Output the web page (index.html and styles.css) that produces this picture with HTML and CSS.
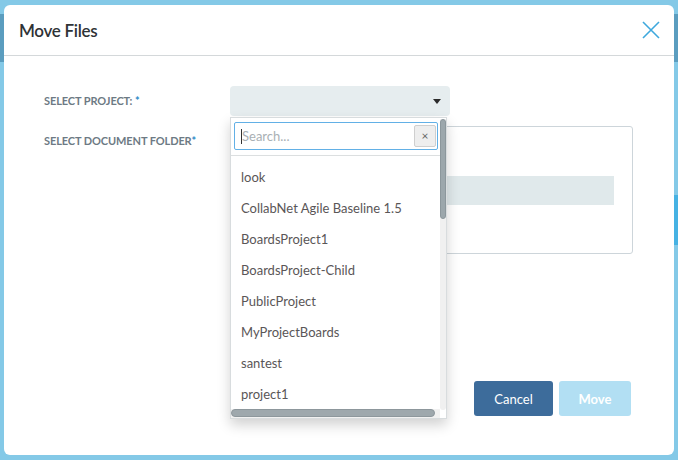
FILE: index.html
```html
<!DOCTYPE html>
<html>
<head>
<meta charset="utf-8">
<link rel="stylesheet" href="styles.css">
</head>
<body>
<div class="modal">
  <div class="modal-header">
    <h1 class="title">Move Files</h1>
    <svg class="close" width="18" height="18" viewBox="0 0 18 18"><path d="M1 1 L17 17 M17 1 L1 17" stroke="#3ea8dd" stroke-width="1.6" fill="none"/></svg>
  </div>
  <div class="modal-body">
    <div class="form-row row-project">
      <div class="label">SELECT PROJECT: <span class="req">*</span></div>
      <div class="field">
        <div class="select">
          <span class="caret"></span>
        </div>
        <div class="dropdown">
          <div class="dd-main">
            <div class="search">
              <span class="search-input"><span class="cursor"></span>Search...</span>
              <span class="clear">×</span>
            </div>
            <ul class="list">
              <li>look</li>
              <li>CollabNet Agile Baseline 1.5</li>
              <li>BoardsProject1</li>
              <li>BoardsProject-Child</li>
              <li>PublicProject</li>
              <li>MyProjectBoards</li>
              <li>santest</li>
              <li>project1</li>
            </ul>
            <div class="hscroll"><div class="hthumb"></div></div>
          </div>
          <div class="vscroll"><div class="vthumb"></div></div>
        </div>
      </div>
    </div>
    <div class="form-row row-folder">
      <div class="label label-folder">SELECT DOCUMENT FOLDER<span class="req">*</span></div>
      <div class="field">
        <div class="tree">
          <div class="tree-row"></div>
        </div>
      </div>
    </div>
  </div>
  <div class="modal-footer">
    <button class="btn btn-cancel">Cancel</button>
    <button class="btn btn-move">Move</button>
  </div>
</div>
</body>
</html>
```
FILE: styles.css
```css
* { box-sizing: border-box; }
html, body { margin: 0; padding: 0; }
body {
  width: 678px;
  height: 460px;
  overflow: hidden;
  padding: 5px 4px;
  font-family: Lato, "Open Sans", sans-serif;
  background:
    linear-gradient(to bottom, transparent 195px, #46b2e3 195px, #46b2e3 245px, transparent 245px) right top / 6px 100% no-repeat,
    linear-gradient(to bottom, transparent 14px, #5b9dbf 14px, #5b9dbf 62px, transparent 62px) 0 0 / 100% 100% no-repeat,
    #84c9e7;
}
.modal {
  width: 670px;
  height: 450px;
  background: #fff;
  border-radius: 6px;
  display: flex;
  flex-direction: column;
}
.modal-header {
  height: 51px;
  border-bottom: 1px solid #d4d8da;
  display: flex;
  align-items: center;
  justify-content: space-between;
  padding: 0 14px 0 15px;
}
.title {
  margin: 0;
  font-size: 17px;
  font-weight: 600;
  color: #2f3336;
  letter-spacing: -0.3px;
}
.close { display: block; margin-top: 0; }
.modal-body {
  flex: 1;
  padding: 30px 0 0 40px;
  display: flex;
  flex-direction: column;
  gap: 10px;
}
.form-row { display: flex; }
.label {
  width: 186px;
  font-size: 11px;
  font-weight: 700;
  color: #6d7a84;
  letter-spacing: -0.1px;
}
.row-project .label { line-height: 30px; }
.label-folder { padding-top: 8px; line-height: 14px; }
.req { color: #2d8bc6; }
.field { position: relative; }
.select {
  width: 220px;
  height: 30px;
  background: #e6edef;
  border-radius: 4px;
  position: relative;
}
.caret {
  position: absolute;
  right: 9px;
  top: 13px;
  width: 0;
  height: 0;
  border-left: 4px solid transparent;
  border-right: 4px solid transparent;
  border-top: 5px solid #2b2b2b;
}
.dropdown {
  position: absolute;
  left: 0;
  top: 31px;
  width: 217px;
  height: 302px;
  background: #fff;
  border: 1px solid #d8dcde;
  box-shadow: 0 6px 12px rgba(0,0,0,0.18);
  display: flex;
  z-index: 5;
}
.dd-main {
  width: 210px;
  display: flex;
  flex-direction: column;
}
.search {
  margin: 4px 2px 0 3px;
  height: 28px;
  border: 1px solid #62b0e6;
  border-radius: 2px;
  display: flex;
  align-items: center;
  justify-content: space-between;
  padding: 0 1px 0 7px;
}
.search-input {
  font-size: 13px;
  color: #a9b0b4;
  display: flex;
  align-items: center;
}
.cursor {
  display: inline-block;
  width: 1px;
  height: 15px;
  background: #333;
  margin-right: 0;
  margin-left: -1px;
}
.clear {
  width: 22px;
  height: 22px;
  background: #eeeeee;
  border: 1px solid #cfcfcf;
  border-radius: 2px;
  font-size: 12px;
  line-height: 19px;
  text-align: center;
  color: #666;
}
.list {
  list-style: none;
  margin: 5px 0 0 0;
  padding: 6px 0 0 10px;
  border-top: 1px solid #dcdfe0;
  flex: 1;
  overflow: hidden;
}
.list li {
  height: 31px;
  line-height: 31px;
  font-size: 13px;
  color: #5a5657;
  white-space: nowrap;
}
.hscroll {
  height: 9px;
  padding: 0 5px 1px 0;
  background: #f1f1f1;
}
.hthumb {
  height: 8px;
  background: #9ea8ad;
  border-radius: 4px;
  border: 1px solid #8d979c;
}
.vscroll {
  width: 6px;
  background: #f0f0f0;
  border-radius: 0 0 3px 3px;
  margin: 1px 0 8px 0;
}
.vthumb {
  height: 100px;
  background: #9ca7ac;
  border-radius: 3px;
  border: 1px solid #8c979c;
}
.tree {
  width: 403px;
  height: 128px;
  border: 1px solid #cdd5da;
  border-radius: 3px;
  padding-top: 49px;
}
.tree-row {
  width: 383px;
  height: 29px;
  background: #e0e9eb;
}
.modal-footer {
  display: flex;
  justify-content: flex-end;
  gap: 6px;
  padding: 0 43px 39px 0;
}
.btn {
  height: 35px;
  border: 0;
  border-radius: 3px;
  color: #fff;
  font-family: Lato, "Open Sans", sans-serif;
  font-size: 13px;
  padding: 0;
}
.btn-cancel { width: 79px; background: #3d6c9b; }
.btn-move { width: 72px; background: #b2dff3; font-weight: 700; }
```
